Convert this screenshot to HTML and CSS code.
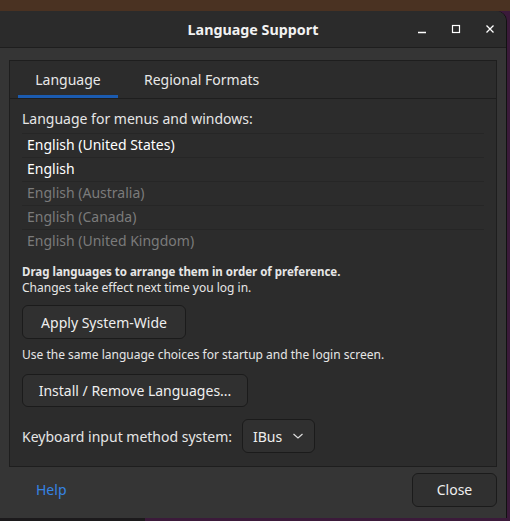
FILE: index.html
```html
<!DOCTYPE html>
<html>
<head>
<meta charset="utf-8">
<link rel="stylesheet" href="styles.css">
</head>
<body>
<div class="desktop">
  <div class="window">
    <div class="titlebar">
      <div class="title">Language Support</div>
      <div class="controls">
        <svg class="ctl" width="16" height="16" viewBox="0 0 16 16"><path d="M4 11.5h8" stroke="#fff" stroke-width="1.3"/></svg>
        <svg class="ctl" width="16" height="16" viewBox="0 0 16 16"><rect x="4.5" y="4.5" width="7" height="7" fill="none" stroke="#fff" stroke-width="1.2"/></svg>
        <svg class="ctl" width="16" height="16" viewBox="0 0 16 16"><path d="M4.5 4.5l7 7M11.5 4.5l-7 7" stroke="#fff" stroke-width="1.3"/></svg>
      </div>
    </div>
    <div class="body">
      <div class="notebook">
        <div class="tabs">
          <div class="tab active">Language</div>
          <div class="tab">Regional Formats</div>
        </div>
        <div class="page">
          <div class="label">Language for menus and windows:</div>
          <div class="list">
            <div class="row on">English (United States)</div>
            <div class="row on">English</div>
            <div class="row off">English (Australia)</div>
            <div class="row off">English (Canada)</div>
            <div class="row off">English (United Kingdom)</div>
          </div>
          <div class="hint">
            <div class="bold">Drag languages to arrange them in order of preference.</div>
            <div>Changes take effect next time you log in.</div>
          </div>
          <button class="btn apply">Apply System-Wide</button>
          <div class="small">Use the same language choices for startup and the login screen.</div>
          <button class="btn install">Install / Remove Languages...</button>
          <div class="kbd">
            <span>Keyboard input method system:</span>
            <button class="btn combo">IBus <svg width="12" height="8" viewBox="0 0 12 8"><path d="M1.5 2l4.5 4 4.5-4" fill="none" stroke="#ddd" stroke-width="1.2"/></svg></button>
          </div>
        </div>
      </div>
      <div class="footer">
        <span class="help">Help</span>
        <button class="btn close">Close</button>
      </div>
    </div>
  </div>
</div>
</body>
</html>
```
FILE: styles.css
```css
html, body {
  margin: 0;
  padding: 0;
  width: 510px;
  height: 521px;
  overflow: hidden;
}
body {
  background: linear-gradient(to right, #1c1a1c 0, #1c1a1c 145px, #3b1a3a 145px);
  font-family: "Noto Sans", "DejaVu Sans", sans-serif;
  color: #f0f0f0;
}
.desktop {
  background: linear-gradient(#4a3222 0, #4a3222 11px, transparent 11px);
  height: 518px;
  padding-top: 11px;
  box-sizing: border-box;
}
.window {
  width: 506px;
  height: 507px;
  background: #353535;
  border-radius: 0 10px 0 0;
  display: flex;
  flex-direction: column;
  overflow: hidden;
  box-shadow: 1px 0 0 #111;
}
.titlebar {
  height: 36px;
  background: #2b2b2b;
  border-bottom: 1px solid #1e1e1e;
  position: relative;
  display: flex;
  align-items: center;
  justify-content: center;
}
.title {
  font-weight: bold;
  font-size: 14.3px;
  color: #f2f2f2;
}
.controls {
  position: absolute;
  right: 8px;
  top: 10px;
  display: flex;
  gap: 18px;
}
.body {
  flex: 1;
  display: flex;
  flex-direction: column;
  padding: 12px 9px 0 9px;
}
.notebook {
  height: 405px;
  border: 1px solid #1e1e1e;
  background: #2c2c2c;
  display: flex;
  flex-direction: column;
}
.tabs {
  height: 37px;
  border-bottom: 1px solid #1e1e1e;
  display: flex;
  padding-left: 8px;
}
.tab {
  font-size: 14px;
  color: #e8e8e8;
  display: flex;
  align-items: center;
  padding: 0 18px;
  box-sizing: border-box;
}
.tab.active {
  width: 100px;
  justify-content: center;
  box-shadow: inset 0 -3px 0 #1b5bb0;
}
.tab + .tab {
  padding-left: 26px;
}
.page {
  padding: 10px 12px 0 12px;
  font-size: 14px;
}
.label {
  color: #e6e6e6;
  height: 24px;
  line-height: 20px;
}
.row {
  height: 24px;
  line-height: 22px;
  border-top: 1px solid #262626;
  box-sizing: border-box;
  padding-left: 5px;
}
.row.on { color: #ffffff; }
.row.off { color: #7b7b7b; }
.hint {
  font-size: 12px;
  line-height: 16px;
  color: #e6e6e6;
  margin-top: 11px;
}
.bold { font-weight: bold; font-size: 11.5px; }
.btn {
  font-family: inherit;
  font-size: 14px;
  color: #eeeeee;
  background: #303030;
  border: 1px solid #1b1b1b;
  border-radius: 6px;
  padding: 0;
  display: flex;
  align-items: center;
  justify-content: center;
}
.apply {
  margin-top: 9px;
  width: 164px;
  height: 34px;
}
.small {
  font-size: 12px;
  color: #e6e6e6;
  margin-top: 8px;
  line-height: 16px;
}
.install {
  margin-top: 11px;
  width: 226px;
  height: 33px;
}
.kbd {
  margin-top: 12px;
  display: flex;
  align-items: center;
  gap: 10px;
  color: #e6e6e6;
}
.combo {
  width: 73px;
  height: 34px;
  gap: 10px;
}
.footer {
  flex: 1;
  display: flex;
  align-items: center;
  justify-content: space-between;
  padding: 0 0 6px 27px;
}
.help {
  color: #3584e4;
  font-size: 14px;
}
.close {
  width: 85px;
  height: 34px;
}
```
